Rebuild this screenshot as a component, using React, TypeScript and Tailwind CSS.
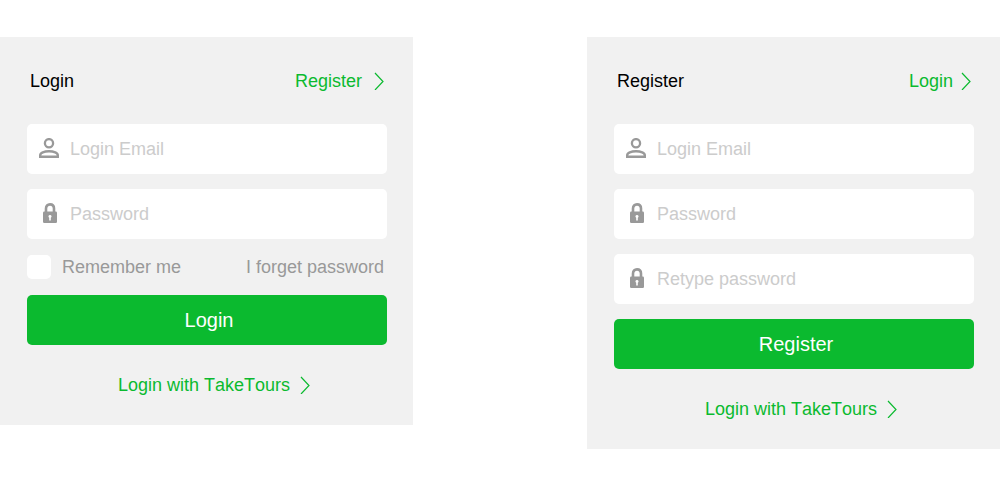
import type { InputHTMLAttributes, ReactNode } from 'react';

function UserIcon() {
  return (
    <svg viewBox="0 0 20 22" className="h-[22px] w-5 shrink-0" fill="none" stroke="#999999" aria-hidden="true">
      <circle cx="10" cy="5.2" r="4.1" strokeWidth="2.3" />
      <path d="M1.2 18.8V17.2C1.2 14.8 5.2 13.2 10 13.2C14.8 13.2 18.8 14.8 18.8 17.2V18.8Z" strokeWidth="2.4" />
    </svg>
  );
}

function LockIcon() {
  return (
    <svg viewBox="0 0 20 22" className="h-[22px] w-5 shrink-0" aria-hidden="true">
      <path d="M7 10V5.6C7 3 8.6 1.4 11 1.4C13.4 1.4 15 3 15 5.6V10" fill="none" stroke="#999999" strokeWidth="2.6" />
      <rect x="4" y="8.6" width="14" height="11.4" rx="1.2" fill="#999999" />
      <path d="M11 12a1.5 1.5 0 0 1 .8 2.8V17.6h-1.6V14.8A1.5 1.5 0 0 1 11 12Z" fill="#ffffff" />
    </svg>
  );
}

function ChevronLink({ children, className }: { children: ReactNode; className: string }) {
  return (
    <a href="#" className={`flex items-center text-[18px] leading-6 text-[#0bba2f] ${className}`}>
      {children}
      <svg viewBox="0 0 10 18" className="h-[18px] w-[10px] shrink-0" fill="none" stroke="currentColor" aria-hidden="true">
        <path d="M1 1L9 9.5L1 18" strokeWidth="1.2" />
      </svg>
    </a>
  );
}

interface FieldProps extends InputHTMLAttributes<HTMLInputElement> {
  icon: ReactNode;
}

function Field({ icon, ...props }: FieldProps) {
  return (
    <label className="flex h-[50px] items-center gap-[11px] rounded-[5px] bg-white px-3">
      {icon}
      <input
        {...props}
        aria-label={props.placeholder}
        className="min-w-0 flex-1 bg-transparent text-[18px] leading-6 text-[#333333] outline-none placeholder:text-[#cccccc]"
      />
    </label>
  );
}

function SubmitButton({ children }: { children: ReactNode }) {
  return (
    <button type="submit" className="h-[50px] rounded-[5px] bg-[#0bba2f] pl-1 text-[20px] leading-6 text-white">
      {children}
    </button>
  );
}

interface PanelProps {
  title: string;
  link: ReactNode;
  children: ReactNode;
}

function Panel({ title, link, children }: PanelProps) {
  return (
    <section className="w-[41.3%] bg-[#f1f1f1] pt-8 pr-[26px] pb-7 pl-[27px]">
      <header className="mb-[31px] flex items-center justify-between px-[3px]">
        <h2 className="text-[18px] leading-6 text-black">{title}</h2>
        {link}
      </header>
      <form className="flex flex-col gap-[15px]" onSubmit={(event) => event.preventDefault()}>
        {children}
      </form>
      <footer className="mt-7 flex justify-center pl-[14px]">
        <ChevronLink className="gap-[10px]">Login with TakeTours</ChevronLink>
      </footer>
    </section>
  );
}

export default function App() {
  return (
    <main className="flex min-h-screen items-start justify-between bg-white pt-[37px] font-['Liberation_Sans',Arial,sans-serif] [font-kerning:none]">
      <Panel title="Login" link={<ChevronLink className="gap-3">Register</ChevronLink>}>
        <Field icon={<UserIcon />} type="email" placeholder="Login Email" />
        <Field icon={<LockIcon />} type="password" placeholder="Password" />
        <div className="flex h-[26px] items-center justify-between pr-[3px] text-[18px] leading-6 text-[#999999]">
          <label className="flex items-center gap-[11px]">
            <input
              type="checkbox"
              className="size-6 appearance-none rounded-[5px] bg-white checked:bg-[#0bba2f]"
            />
            Remember me
          </label>
          <a href="#">I forget password</a>
        </div>
        <SubmitButton>Login</SubmitButton>
      </Panel>

      <Panel title="Register" link={<ChevronLink className="gap-2">Login</ChevronLink>}>
        <Field icon={<UserIcon />} type="email" placeholder="Login Email" />
        <Field icon={<LockIcon />} type="password" placeholder="Password" />
        <Field icon={<LockIcon />} type="password" placeholder="Retype password" />
        <SubmitButton>Register</SubmitButton>
      </Panel>
    </main>
  );
}
